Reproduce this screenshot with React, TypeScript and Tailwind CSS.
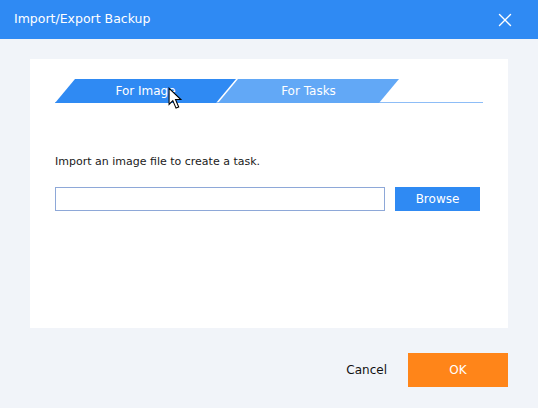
import { X } from 'lucide-react';

const font = { fontFamily: 'Tahoma, "DejaVu Sans", "Liberation Sans", sans-serif' };

export default function App() {
  return (
    <div className="w-[538px] h-[408px] flex flex-col bg-[#f1f4f9] text-[11px]" style={font}>
      <div className="h-[39px] bg-[#2f8af3] flex items-center justify-between pl-[14px] pr-[22px] text-white">
        <span className="text-[12.5px]">Import/Export Backup</span>
        <X size={22} strokeWidth={1.5} />
      </div>

      <div className="mx-[30px] mt-[20px] h-[269px] bg-white px-[25px] pt-[20px] relative">
        <div className="flex w-[428px] h-[24px] border-b border-[#8dbdf7]">
          <div className="w-[181px] h-[24px] bg-[#2f8af3] text-white text-[12px] flex items-center justify-center [clip-path:polygon(20px_0,100%_0,calc(100%-20px)_100%,0_100%)]">
            For Image
          </div>
          <div className="-ml-[18px] w-[181px] h-[24px] bg-[#62a8f6] text-white text-[12px] flex items-center justify-center [clip-path:polygon(20px_0,100%_0,calc(100%-20px)_100%,0_100%)]">
            For Tasks
          </div>
        </div>

        <p className="mt-[51px] text-[#1a1a1a]">Import an image file to create a task.</p>

        <div className="mt-[16px] flex gap-[10px]">
          <div className="w-[330px] h-[24px] border border-[#8ea8d8] bg-white" />
          <button className="w-[85px] h-[24px] bg-[#2f8af3] text-white text-[12px] pt-[1px]">Browse</button>
        </div>

        <svg className="absolute left-[138px] top-[28px]" width="15" height="24" viewBox="0 0 14 22">
          <path d="M1 1 L1 16 L4.5 12.5 L7.5 19.5 L10 18.5 L7 11.5 L12 11.5 Z" fill="white" stroke="black" strokeWidth="1" strokeLinejoin="miter" />
        </svg>
      </div>

      <div className="flex items-center justify-end mt-[25px] pr-[30px] gap-[21px]">
        <button className="text-[12px] text-[#111]">Cancel</button>
        <button className="w-[100px] h-[34px] bg-[#ff8519] text-white text-[12px]">OK</button>
      </div>
    </div>
  );
}
